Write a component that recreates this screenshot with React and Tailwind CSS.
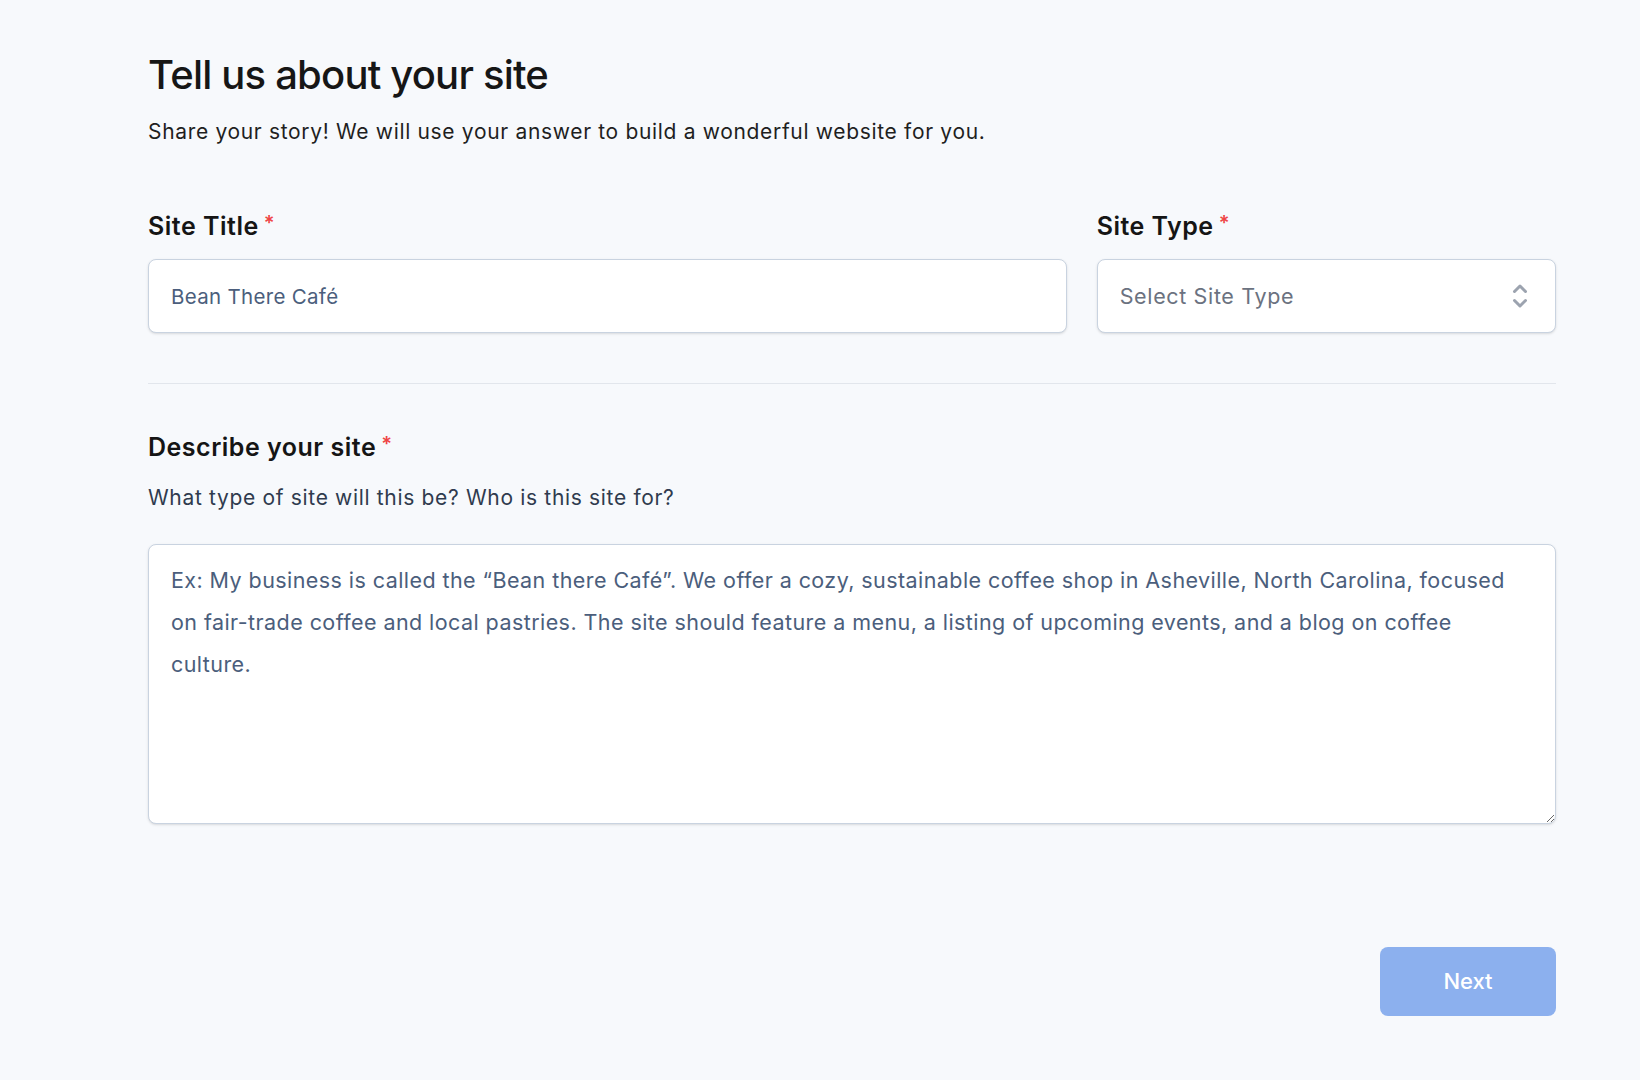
import React from 'react';

const Label = ({ children }) => (
  <label className="flex items-center text-[25px] leading-8 font-semibold text-[#151515] tracking-[0.02em]">
    {children}
    <span className="ml-[5px] -mt-[6px] text-[20px] leading-5 font-semibold text-[#ef4444]">*</span>
  </label>
);

const ChevronUpDown = () => (
  <svg width="18" height="26" viewBox="0 0 18 26" fill="none" stroke="#9ca3af" strokeWidth="3" strokeLinecap="round" strokeLinejoin="round">
    <path d="M3.5 8.5 L9 3 L14.5 8.5" />
    <path d="M3.5 17.5 L9 23 L14.5 17.5" />
  </svg>
);

const App = () => {
  return (
    <div className="min-h-screen bg-[#f7f9fc] pl-[148px] pr-[84px] pt-[51px] pb-16" style={{ fontFamily: 'Inter, "Noto Sans", sans-serif' }}>
      <h1 className="text-[40px] leading-[48px] font-medium tracking-[-0.02em] text-[#161616]">
        Tell us about your site
      </h1>
      <p className="mt-[19px] text-[21px] leading-7 tracking-[0.032em] text-[#1f1f1f]">
        Share your story! We will use your answer to build a wonderful website for you.
      </p>

      <div className="mt-[64px] grid grid-cols-[2fr_1fr] gap-x-[30px]">
        <div>
          <Label>Site Title</Label>
          <input
            type="text"
            defaultValue="Bean There Café"
            className="mt-[17px] block w-full h-[74px] rounded-lg border border-[#c9d3e0] bg-white px-[22px] text-[20.5px] tracking-[0.015em] text-[#4b5e7c] shadow-sm outline-none"
          />
        </div>
        <div>
          <Label>Site Type</Label>
          <div className="mt-[17px] flex h-[74px] items-center justify-between rounded-lg border border-[#c9d3e0] bg-white pl-[22px] pr-[26px] shadow-sm">
            <span className="text-[21.5px] tracking-[0.03em] text-[#6b7280]">Select Site Type</span>
            <ChevronUpDown />
          </div>
        </div>
      </div>

      <div className="mt-[50px] h-px bg-[#e2e6ec]" />

      <div className="mt-[47px]">
        <Label>Describe your site</Label>
        <p className="mt-[21px] text-[21px] leading-7 tracking-[0.032em] text-[#2f3b4e]">
          What type of site will this be? Who is this site for?
        </p>
        <textarea
          className="mt-[32px] block w-full h-[280px] resize-y rounded-lg border border-[#c9d3e0] bg-white px-[22px] pt-[14px] text-[21.5px] leading-[42px] tracking-[0.02em] text-[#4b5e7c] shadow-sm outline-none"
          defaultValue={'Ex: My business is called the \u201cBean there Caf\u00e9\u201d. We offer a cozy, sustainable coffee shop in Asheville, North Carolina, focused on fair-trade coffee and local pastries. The site should feature a menu, a listing of upcoming events, and a blog on coffee culture.'}
        />
      </div>

      <div className="mt-[123px] flex justify-end">
        <button className="h-[69px] w-[176px] rounded-lg bg-[#8cb0ee] text-[22px] font-medium text-white">
          Next
        </button>
      </div>
    </div>
  );
};

export default App;
